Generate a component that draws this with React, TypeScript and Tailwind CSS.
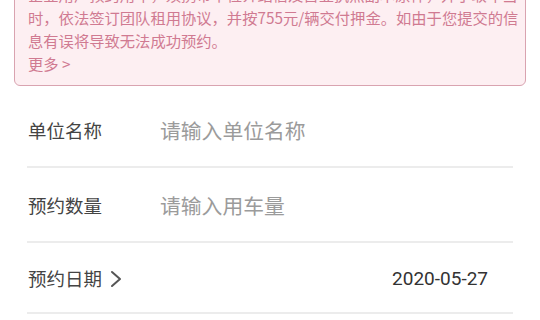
import React from "react";

export default function App() {
  const font = { fontFamily: '"Noto Sans CJK SC", "Noto Sans", sans-serif' };
  return (
    <div className="w-[540px] h-[320px] overflow-hidden bg-white" style={font}>
      <div className="mx-[14px] -mt-[28px] border border-[#d9a3b0] rounded-b-[6px] bg-[#fdeff2] pt-[10px] pb-[10px] pl-[13px] pr-[10px] text-[15.3px] leading-[23px] text-[#d07a91]">
        <div className="whitespace-nowrap">企业用户预约用车，须携带单位介绍信及营业执照副本原件，并于取车当</div>
        <div className="whitespace-nowrap">时，依法签订团队租用协议，并按755元/辆交付押金。如由于您提交的信</div>
        <div className="whitespace-nowrap">息有误将导致无法成功预约。</div>
        <div className="whitespace-nowrap">更多 &gt;</div>
      </div>
      <div className="mt-[7px] mx-[27px]">
        <div className="h-[75px] pt-[3px] flex items-center border-b-2 border-[#ececec]">
          <span className="w-[133px] pl-[1px] text-[18.5px] text-[#444]">单位名称</span>
          <span className="text-[20.8px] text-[#9b9b9b]">请输入单位名称</span>
        </div>
        <div className="h-[75px] pt-[3px] flex items-center border-b-2 border-[#ececec]">
          <span className="w-[133px] pl-[1px] text-[18.5px] text-[#444]">预约数量</span>
          <span className="text-[20.8px] text-[#9b9b9b]">请输入用车量</span>
        </div>
        <div className="h-[71px] pt-[3px] flex items-center justify-between border-b-2 border-[#ececec] pr-[25px]">
          <span className="flex items-center pl-[1px] text-[18.5px] text-[#444]">
            预约日期
            <svg className="ml-[8px]" width="12" height="18" viewBox="0 0 12 18" fill="none">
              <path d="M2 2 L10 9 L2 16" stroke="#555" strokeWidth="2" strokeLinecap="round" strokeLinejoin="round" />
            </svg>
          </span>
          <span className="text-[19px] text-[#333]" style={{ fontFamily: 'Roboto, "Noto Sans", sans-serif' }}>2020-05-27</span>
        </div>
      </div>
    </div>
  );
}
